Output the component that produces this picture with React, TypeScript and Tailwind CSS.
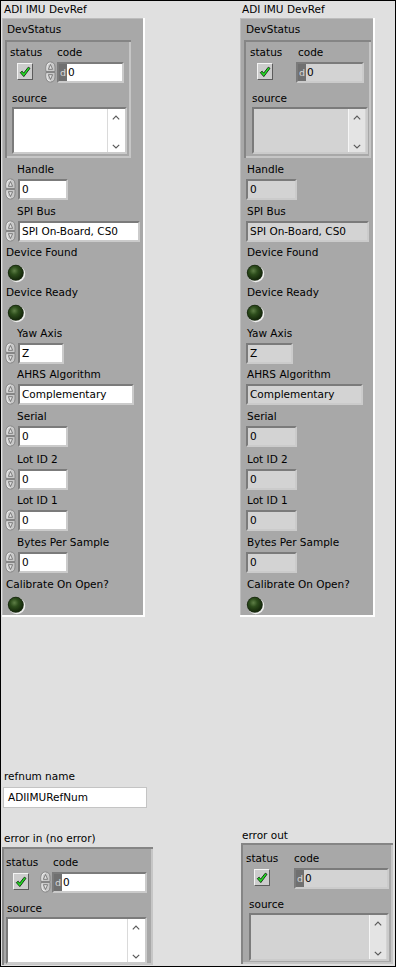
import React from "react";

const TXT = "text-[10.5px] leading-[16px] text-black whitespace-nowrap";
const SUNK =
  "border-2 border-t-[#7b7b7b] border-l-[#7b7b7b] border-r-[#cbcbcb] border-b-[#cbcbcb]";

function Label({ children, className = "" }: { children: React.ReactNode; className?: string }) {
  return <div className={`${TXT} h-[16px] ${className}`}>{children}</div>;
}

function Spinner() {
  return (
    <svg width="11" height="22" viewBox="0 0 11 22" className="shrink-0">
      <path d="M1 10.5 V6 C1 2.5 3 1 5.5 1 C8 1 10 2.5 10 6 V10.5 Z" fill="#c9c9c9" stroke="#868686" strokeWidth="1" />
      <path d="M1 11.5 V16 C1 19.5 3 21 5.5 21 C8 21 10 19.5 10 16 V11.5 Z" fill="#c9c9c9" stroke="#868686" strokeWidth="1" />
      <path d="M2 9.5 V6 C2 3.5 3.5 2 5.5 2" fill="none" stroke="#f2f2f2" strokeWidth="1" />
      <path d="M2 12.5 V16 C2 18.5 3.5 20 5.5 20" fill="none" stroke="#f2f2f2" strokeWidth="1" />
      <path d="M5.5 3.5 L7.6 8.3 H3.4 Z" fill="#e6e6e6" stroke="#666666" strokeWidth="0.8" strokeLinejoin="round" />
      <path d="M5.5 18.5 L7.6 13.7 H3.4 Z" fill="#e6e6e6" stroke="#666666" strokeWidth="0.8" strokeLinejoin="round" />
    </svg>
  );
}

function Field({
  value,
  indicator = false,
  radix = false,
  className = "",
}: {
  value: string;
  indicator?: boolean;
  radix?: boolean;
  className?: string;
}) {
  return (
    <div className={`h-[21px] flex ${SUNK} ${indicator ? "bg-[#d3d3d3]" : "bg-white"} ${className}`}>
      {radix && (
        <span className="w-[8px] shrink-0 h-full bg-[#707070] text-[#d8d8d8] text-[9.5px] leading-[17px] text-center">
          d
        </span>
      )}
      <span className={`${radix ? "pl-[1px]" : "pl-[2px]"} text-[10.5px] leading-[17px] text-black whitespace-nowrap`}>
        {value}
      </span>
    </div>
  );
}

function Check() {
  return (
    <div className="w-[16px] h-[17px] bg-[#cdcdcd] border border-t-[#f4f4f4] border-l-[#f4f4f4] border-r-[#5c5c5c] border-b-[#5c5c5c] flex items-center justify-center">
      <svg width="12" height="12" viewBox="0 0 12 12">
        <path
          d="M1.3 6.6 L3.2 5.2 L4.6 7.2 L9.3 1.2 L11 2.3 L4.8 10.6 Z"
          fill="#22e622"
          stroke="#0b2a0b"
          strokeWidth="0.9"
          strokeLinejoin="round"
        />
      </svg>
    </div>
  );
}

function Led() {
  return (
    <svg width="19" height="19" viewBox="0 0 19 19">
      <defs>
        <radialGradient id="ledg" cx="0.4" cy="0.36" r="0.62">
          <stop offset="0" stopColor="#5f7f47" />
          <stop offset="0.45" stopColor="#2d4d1c" />
          <stop offset="1" stopColor="#15290b" />
        </radialGradient>
      </defs>
      <circle cx="9.9" cy="9.9" r="8.3" fill="#eeeeee" />
      <circle cx="8.8" cy="8.8" r="8" fill="#1b2b12" />
      <circle cx="8.8" cy="8.8" r="7.2" fill="url(#ledg)" />
    </svg>
  );
}

function SourceBox({ indicator = false, className = "" }: { indicator?: boolean; className?: string }) {
  return (
    <div className={`flex justify-end ${SUNK} ${indicator ? "bg-[#d3d3d3]" : "bg-white"} ${className}`}>
      <div
        className={`w-[17px] mr-[1px] flex flex-col items-center justify-between pt-[6px] pb-[3px] border-l ${
          indicator ? "bg-[#e4e4e4] border-l-[#f6f6f6]" : "bg-white border-l-[#dadada]"
        }`}
      >
        <svg width="8" height="5" viewBox="0 0 8 5">
          <path d="M0.8 4.4 L4 1.2 L7.2 4.4" fill="none" stroke="#5a5a5a" strokeWidth="1.2" />
        </svg>
        <svg width="8" height="5" viewBox="0 0 8 5">
          <path d="M0.8 0.8 L4 4 L7.2 0.8" fill="none" stroke="#5a5a5a" strokeWidth="1.2" />
        </svg>
      </div>
    </div>
  );
}

type ECProps = {
  control: boolean;
  frame: string;
  pt: string;
  pl: string;
  statusW: string;
  checkMl: string;
  codeMl: string;
  fieldW: string;
  srcMl: string;
  boxMl: string;
  boxW: string;
  boxH: string;
};

function ErrorCluster(p: ECProps) {
  return (
    <div
      className={`${p.frame} bg-[#a8a8a8] shadow-[inset_2px_2px_0_#858585,inset_-2px_-2px_0_#c6c6c6] flex flex-col ${p.pt} ${p.pl}`}
    >
      <div className="flex">
        <div className={`${p.statusW} shrink-0 flex flex-col`}>
          <Label>status</Label>
          <div className={`mt-[3px] ${p.checkMl}`}>
            <Check />
          </div>
        </div>
        <div className="flex flex-col">
          <Label className={p.codeMl}>code</Label>
          <div className="mt-[1px] h-[22px] flex items-center gap-[1px]">
            {p.control && <Spinner />}
            <Field radix value="0" indicator={!p.control} className={p.fieldW} />
          </div>
        </div>
      </div>
      <Label className={`mt-[7px] ${p.srcMl}`}>source</Label>
      <SourceBox indicator={!p.control} className={`mt-[1px] ${p.boxMl} ${p.boxW} ${p.boxH}`} />
    </div>
  );
}

function NumCtrl({ label, value, w, mt }: { label: string; value: string; w: string; mt: string }) {
  return (
    <div className={`flex flex-col ${mt}`}>
      <Label className="ml-[15px]">{label}</Label>
      <div className="mt-[1px] h-[22px] ml-[3px] flex items-center gap-[2px]">
        <Spinner />
        <Field value={value} className={w} />
      </div>
    </div>
  );
}

function NumInd({ label, value, w, mt }: { label: string; value: string; w: string; mt: string }) {
  return (
    <div className={`flex flex-col ${mt}`}>
      <Label className="ml-[7px]">{label}</Label>
      <div className="mt-[1px] h-[22px] ml-[6px] flex items-center">
        <Field indicator value={value} className={w} />
      </div>
    </div>
  );
}

function Bool({ label, mt, labelMl, ledMl }: { label: string; mt: string; labelMl: string; ledMl: string }) {
  return (
    <div className={`flex flex-col ${mt}`}>
      <Label className={labelMl}>{label}</Label>
      <div className={`mt-[4px] h-[18px] ${ledMl}`}>
        <Led />
      </div>
    </div>
  );
}

export default function App() {
  return (
    <div className="w-[396px] h-[967px] border border-black bg-[#e0e0e0] overflow-hidden font-['DejaVu_Sans',Verdana,sans-serif] flex flex-col">
      {/* top row */}
      <div className="flex items-start">
        {/* control cluster */}
        <div className="ml-[1px] flex flex-col">
          <Label className="pl-[2px]">ADI IMU DevRef</Label>
          <div className="mt-[1px] w-[143px] h-[599px] bg-[#a8a8a8] border-r-2 border-b-2 border-white shadow-[inset_1px_1px_0_#bdbdbd] flex flex-col">
            <Label className="ml-[5px] mt-[3px]">DevStatus</Label>
            <div className="mt-[3px] ml-[3px]">
              <ErrorCluster
                control
                frame="w-[126px] h-[118px]"
                pt="pt-[4px]"
                pl="pl-[5px]"
                statusW="w-[35px]"
                checkMl="ml-[7px]"
                codeMl="ml-[12px]"
                fieldW="w-[67px]"
                srcMl="ml-[2px]"
                boxMl="ml-[2px]"
                boxW="w-[115px]"
                boxH="h-[47px]"
              />
            </div>
            <NumCtrl label="Handle" value="0" w="w-[50px]" mt="mt-[3px]" />
            <NumCtrl label="SPI Bus" value="SPI On-Board, CS0" w="w-[122px]" mt="mt-[3px]" />
            <Bool label="Device Found" mt="mt-[2px]" labelMl="ml-[4px]" ledMl="ml-[5px]" />
            <Bool label="Device Ready" mt="mt-[2px]" labelMl="ml-[4px]" ledMl="ml-[5px]" />
            <NumCtrl label="Yaw Axis" value="Z" w="w-[46px]" mt="mt-[3px]" />
            <NumCtrl label="AHRS Algorithm" value="Complementary" w="w-[116px]" mt="mt-[2px]" />
            <NumCtrl label="Serial" value="0" w="w-[50px]" mt="mt-[3px]" />
            <NumCtrl label="Lot ID 2" value="0" w="w-[50px]" mt="mt-[4px]" />
            <NumCtrl label="Lot ID 1" value="0" w="w-[50px]" mt="mt-[2px]" />
            <NumCtrl label="Bytes Per Sample" value="0" w="w-[50px]" mt="mt-[3px]" />
            <Bool label="Calibrate On Open?" mt="mt-[3px]" labelMl="ml-[4px]" ledMl="ml-[5px]" />
          </div>
        </div>

        {/* indicator cluster */}
        <div className="ml-[95px] flex flex-col">
          <Label className="pl-[2px]">ADI IMU DevRef</Label>
          <div className="mt-[1px] w-[135px] h-[599px] bg-[#a8a8a8] border-r-2 border-b-2 border-white shadow-[inset_1px_1px_0_#bdbdbd] flex flex-col">
            <Label className="ml-[6px] mt-[3px]">DevStatus</Label>
            <div className="mt-[3px] ml-[4px]">
              <ErrorCluster
                control={false}
                frame="w-[127px] h-[118px]"
                pt="pt-[4px]"
                pl="pl-[6px]"
                statusW="w-[46px]"
                checkMl="ml-[7px]"
                codeMl="ml-[2px]"
                fieldW="w-[68px]"
                srcMl="ml-[2px]"
                boxMl="ml-[2px]"
                boxW="w-[116px]"
                boxH="h-[47px]"
              />
            </div>
            <NumInd label="Handle" value="0" w="w-[51px]" mt="mt-[3px]" />
            <NumInd label="SPI Bus" value="SPI On-Board, CS0" w="w-[123px]" mt="mt-[3px]" />
            <Bool label="Device Found" mt="mt-[2px]" labelMl="ml-[7px]" ledMl="ml-[6px]" />
            <Bool label="Device Ready" mt="mt-[2px]" labelMl="ml-[7px]" ledMl="ml-[6px]" />
            <NumInd label="Yaw Axis" value="Z" w="w-[47px]" mt="mt-[3px]" />
            <NumInd label="AHRS Algorithm" value="Complementary" w="w-[117px]" mt="mt-[2px]" />
            <NumInd label="Serial" value="0" w="w-[51px]" mt="mt-[3px]" />
            <NumInd label="Lot ID 2" value="0" w="w-[51px]" mt="mt-[4px]" />
            <NumInd label="Lot ID 1" value="0" w="w-[51px]" mt="mt-[2px]" />
            <NumInd label="Bytes Per Sample" value="0" w="w-[51px]" mt="mt-[3px]" />
            <Bool label="Calibrate On Open?" mt="mt-[3px]" labelMl="ml-[7px]" ledMl="ml-[6px]" />
          </div>
        </div>
      </div>

      {/* bottom row */}
      <div className="mt-[151px] flex items-start">
        <div className="ml-[1px] w-[151px] flex flex-col">
          <Label className="ml-[2px]">refnum name</Label>
          <div className="mt-[3px] ml-[1px] w-[144px] h-[21px] bg-white border border-[#c4c4c4] pl-[4px] text-[10.5px] leading-[19px] text-black">
            ADIIMURefNum
          </div>
          <Label className="mt-[22px] ml-[2px]">error in (no error)</Label>
          <div className="mt-[1px]">
            <ErrorCluster
              control
              frame="w-[151px] h-[118px]"
              pt="pt-[7px]"
              pl="pl-[4px]"
              statusW="w-[34px]"
              checkMl="ml-[7px]"
              codeMl="ml-[13px]"
              fieldW="w-[95px]"
              srcMl="ml-[1px]"
              boxMl="ml-0"
              boxW="w-[141px]"
              boxH="h-[47px]"
            />
          </div>
        </div>
        <div className="ml-[88px] flex flex-col">
          <Label className="mt-[59px] ml-[1px]">error out</Label>
          <ErrorCluster
            control={false}
            frame="w-[152px] h-[121px]"
            pt="pt-[7px]"
            pl="pl-[5px]"
            statusW="w-[48px]"
            checkMl="ml-[8px]"
            codeMl="ml-0"
            fieldW="w-[95px]"
            srcMl="ml-[3px]"
            boxMl="ml-[3px]"
            boxW="w-[140px]"
            boxH="h-[48px]"
          />
        </div>
      </div>
    </div>
  );
}
